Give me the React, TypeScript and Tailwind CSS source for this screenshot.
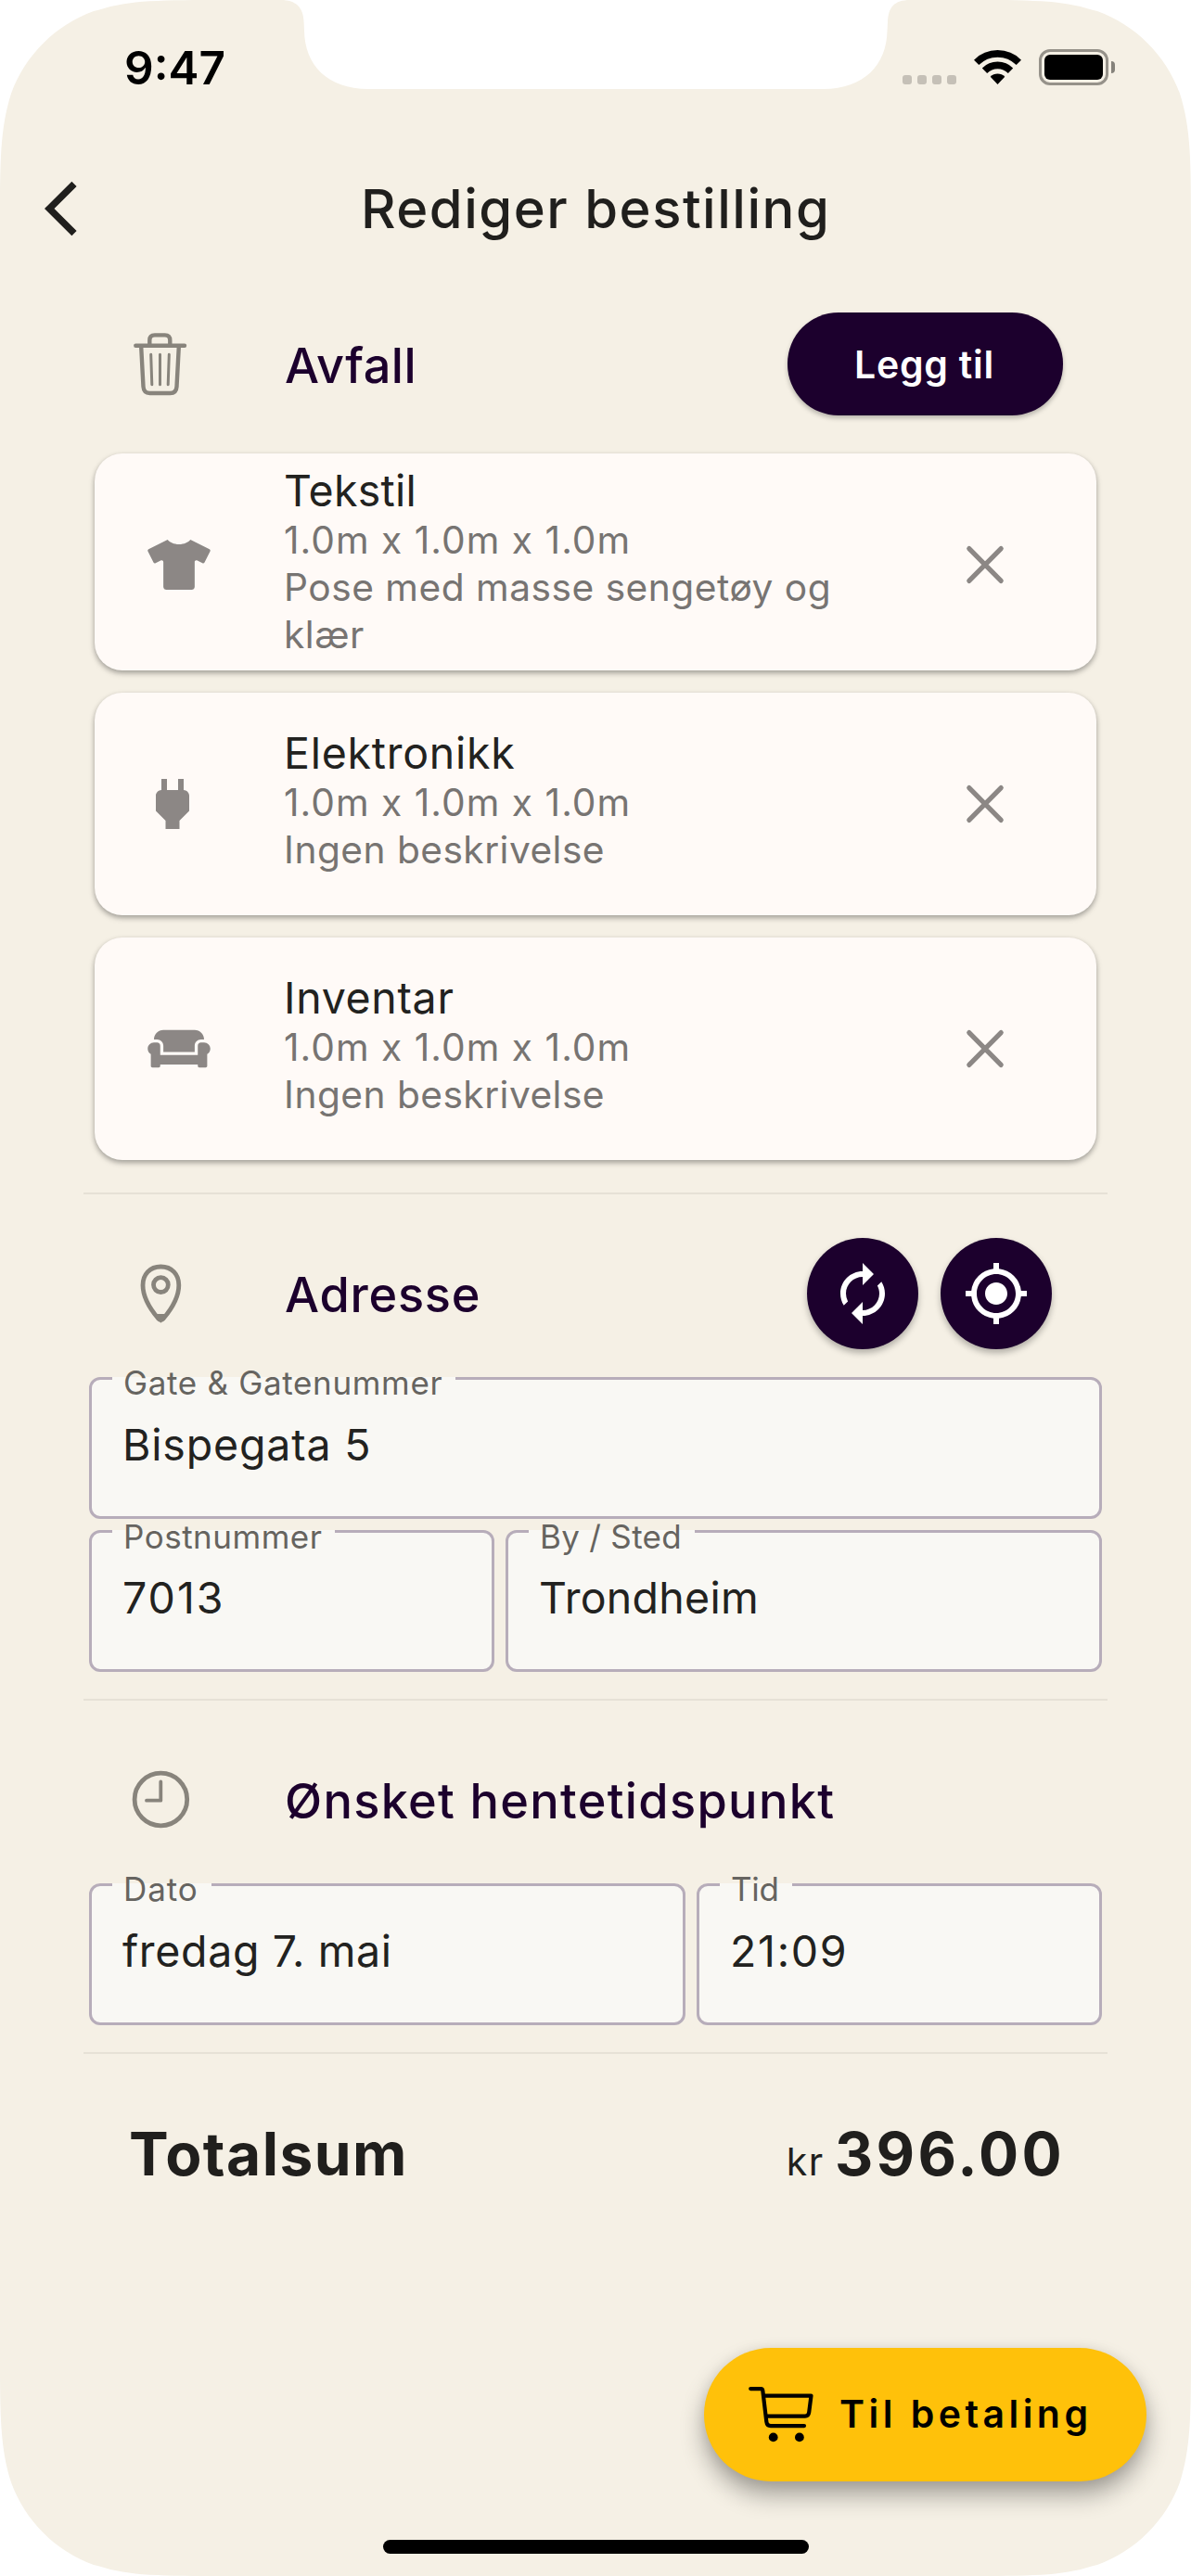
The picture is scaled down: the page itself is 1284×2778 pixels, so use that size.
import type { ReactNode } from "react";
import { FaCouch, FaTshirt } from "react-icons/fa";
import { MdAutorenew, MdMyLocation, MdPower } from "react-icons/md";

const CORNER =
  "M0 0H244.6C174.2 0 138.9 0 107.2 10.5L101 12C59.7 27 27 59.7 12 101C0 138.9 0 174.2 0 244.6Z";

function Corner({ className }: { className: string }) {
  return (
    <svg viewBox="0 0 245 245" className={`pointer-events-none absolute h-[245px] w-[245px] fill-white ${className}`}>
      <path d={CORNER} />
    </svg>
  );
}

function Notch() {
  return (
    <svg viewBox="0 0 684 96" className="absolute top-0 left-[300px] h-[96px] w-[684px] fill-white">
      <path d="M3 0C19 0 27.2 8 27.6 24L28 33C28.500 70 53 96 97 96H588C631 96 656 70 656.500 33L657 24C657.500 8 664 0 681 0Z" />
    </svg>
  );
}

function StatusBar() {
  return (
    <div className="flex h-[195px] items-start justify-between pt-[43px] pr-[82px] pl-[134px]">
      <span className="text-[49.5px] leading-[60px] font-semibold text-black">9:47</span>
      <div className="mt-[10px] flex items-start">
        <div className="mt-[28px] flex gap-[6px]">
          {[0, 1, 2, 3].map((i) => (
            <span key={i} className="h-[10px] w-[10px] rounded-[3px] bg-[#c5c0b7]" />
          ))}
        </div>
        <svg viewBox="0 0 51 37" className="mt-px ml-[19px] h-[37px] w-[51px]" fill="none" stroke="#000" strokeWidth="7.6">
          <path d="M2.660 13.360A32.300 32.300 0 0 1 48.340 13.360" />
          <path d="M11.500 22.200A19.800 19.800 0 0 1 39.500 22.200" />
          <path d="M25.500 37L17.700 28.800A11 11 0 0 1 33.300 28.800Z" fill="#000" stroke="none" />
        </svg>
        <div className="ml-[19px] flex h-[39px] w-[75px] rounded-[12px] border-[3px] border-[#96928a] p-[3px]">
          <span className="flex-1 rounded-[6px] bg-black" />
        </div>
        <span className="mt-[13px] ml-[3px] h-[13px] w-[4px] rounded-r-full bg-[#85827b]" />
      </div>
    </div>
  );
}

function TrashIcon() {
  return (
    <svg viewBox="137 357 72 72" className="h-[72px] w-[72px]" fill="none" stroke="#88847c" strokeLinecap="round" strokeLinejoin="round">
      <path strokeWidth="4.400" d="M146.300 372.700H199M161.300 372V367Q161.300 361.400 166.800 361.400H177.800Q183.300 361.400 183.300 367V372" />
      <path strokeWidth="4.400" d="M152.200 374L154.500 417Q155 424 161.500 424H183.500Q190 424 190.500 417L192.800 374" />
      <path strokeWidth="3" d="M162.700 382.300L163.800 414.700M172.500 382.300V414.700M182.300 382.300L181.200 414.700" />
    </svg>
  );
}

function PinIcon() {
  return (
    <svg viewBox="137 1359 72 72" className="h-[72px] w-[72px]" fill="none" stroke="#88847c" strokeWidth="4.800">
      <path
        strokeLinejoin="round"
        d="M173.400 1366C161.500 1366 154 1374.500 154 1386C154 1399 163.500 1413.500 170.500 1421.800Q173.400 1425 176.300 1421.800C183.300 1413.500 192.800 1399 192.800 1386C192.800 1374.500 185.300 1366 173.400 1366Z"
      />
      <path d="M170.500 1419.500L173.400 1423L176.300 1419.500Z" />
      <circle cx="173.400" cy="1385.600" r="7.900" />
    </svg>
  );
}

function ClockIcon() {
  return (
    <svg viewBox="137 1905 72 72" className="h-[72px] w-[72px]" fill="none" stroke="#88847c" strokeLinecap="round" strokeLinejoin="round">
      <circle cx="173.400" cy="1940.500" r="28.300" strokeWidth="4.800" />
      <path strokeWidth="3.800" d="M173.300 1921.500V1941.700H158" />
    </svg>
  );
}

function CartIcon() {
  return (
    <svg viewBox="0 0 70 60" className="h-[60px] w-[70px]" fill="none" stroke="#000" strokeWidth="4.200" strokeLinecap="round" strokeLinejoin="round">
      <path d="M2.200 2.100H13.500Q15 2.100 15.300 4L19.300 37.500Q19.800 42.100 24 42.100H60" />
      <path d="M16.300 9.600H67.500L65.200 27.500Q64.600 31.600 61 31.600H19.500" />
      <g fill="#000" stroke="none">
        <circle cx="26.700" cy="54.400" r="4.900" />
        <circle cx="54.900" cy="54.400" r="4.900" />
      </g>
    </svg>
  );
}

function SectionHeader({ icon, title, titleClass, children }: { icon: ReactNode; title: string; titleClass: string; children?: ReactNode }) {
  return (
    <div className="flex items-center pr-[138px] pl-[137px]">
      {icon}
      <h2 className={`ml-[98px] flex-1 pt-[2px] text-[52.3px] leading-[64px] font-medium whitespace-nowrap text-[#1c002d] ${titleClass}`}>{title}</h2>
      {children}
    </div>
  );
}

function WasteCard({ icon, title, titleClass, lines, className, iconClass, closeClass }: {
  icon: ReactNode;
  title: string;
  titleClass: string;
  lines: { text: string; className: string }[];
  className: string;
  iconClass: string;
  closeClass?: string;
}) {
  return (
    <article className={`mx-[102px] flex items-center rounded-[30px] bg-[#fffaf7] pr-[96px] shadow-[0_3px_6px_rgba(0,0,0,0.26),0_2px_5px_rgba(0,0,0,0.12)] ${className}`}>
      <div className={`flex w-[204px] text-[#8c8785] ${iconClass}`}>{icon}</div>
      <div className="flex-1">
        <h3 className={`text-[46.5px] leading-[56px] text-[#222220] ${titleClass}`}>{title}</h3>
        {lines.map((l) => (
          <p key={l.text} className={`text-[40.7px] leading-[51px] whitespace-nowrap text-[#777472] ${l.className}`}>{l.text}</p>
        ))}
      </div>
      <svg viewBox="0 0 48 48" className={`h-[48px] w-[48px] ${closeClass ?? ""}`} stroke="#8c8785" strokeWidth="5.200" strokeLinecap="round">
        <path d="M6.800 6.600L41.200 41.400M41.200 6.600L6.800 41.400" />
      </svg>
    </article>
  );
}

function Field({ label, labelClass, value, valueClass, className }: {
  label: string;
  labelClass: string;
  value: string;
  valueClass: string;
  className: string;
}) {
  return (
    <div className={`relative h-[153px] rounded-[12px] border-[3px] border-[#b7adba] bg-[#f9f8f4] pt-[42px] pl-[33px] ${className}`}>
      <div className="absolute -top-[3px] left-[22px] flex h-[3px] items-start bg-[#f9f8f4] pr-[14px] pl-[12px]">
        <span className={`text-[35px] leading-[42px] whitespace-nowrap text-[#666460] ${labelClass}`}>{label}</span>
      </div>
      <div className={`text-[46.5px] leading-[56px] whitespace-nowrap text-[#222220] ${valueClass}`}>{value}</div>
    </div>
  );
}

function RoundButton({ children }: { children: ReactNode }) {
  return (
    <button className="flex h-[120px] w-[120px] items-center justify-center rounded-full bg-[#1c002d] text-[72px] text-white shadow-[0_4px_7px_rgba(0,0,0,0.28)]">
      {children}
    </button>
  );
}

function Divider() {
  return <div className="mx-[90px] h-[2px] shrink-0 bg-[#e6e1d6]" />;
}

const DIMENSIONS = { text: "1.0m x 1.0m x 1.0m", className: "tracking-[1.02px]" };
const NO_DESCRIPTION = { text: "Ingen beskrivelse", className: "tracking-[0.46px]" };

export default function App() {
  return (
    <div className="relative flex h-[2778px] w-[1284px] flex-col overflow-hidden bg-[#f5f0e5] font-['Inter',sans-serif]">
      <Corner className="top-0 left-0" />
      <Corner className="top-0 right-0 -scale-x-100" />
      <Corner className="bottom-0 left-0 -scale-y-100" />
      <Corner className="right-0 bottom-0 rotate-180" />
      <Notch />

      <StatusBar />
      <header className="flex h-[60px] items-center pl-[48px]">
        <svg viewBox="0 0 11.800 20" className="h-[60px] w-[35px]" fill="#201f1d">
          <path d="M11.670 1.870L9.900 0.100L0 10L9.900 19.900L11.670 18.130L3.540 10Z" />
        </svg>
        <h1 className="ml-[306px] text-[58px] leading-[60px] font-medium tracking-[1.5px] whitespace-nowrap text-[#201f1d]">Rediger bestilling</h1>
      </header>

      <div className="mt-[82px]">
        <SectionHeader icon={<TrashIcon />} title="Avfall" titleClass="tracking-[0.47px]">
          <button className="flex h-[111px] w-[297px] items-center justify-center rounded-[55px] bg-[#1c002d] pr-[2px] text-[41px] leading-[50px] font-[560] tracking-[0.76px] text-white shadow-[0_3px_5px_rgba(0,0,0,0.25)]">
            Legg til
          </button>
        </SectionHeader>
      </div>

      <div className="mt-[41px] mb-[35px] flex flex-col gap-[24px]">
        <WasteCard
          className="h-[234px]"
          iconClass="pl-[57px] mt-[5px]"
          closeClass="mt-[5px]"
          icon={<FaTshirt className="h-[54px] w-[68px]" />}
          title="Tekstil"
          titleClass="-mt-[2px] tracking-[0.24px]"
          lines={[
            DIMENSIONS,
            { text: "Pose med masse sengetøy og", className: "tracking-[0.5px]" },
            { text: "klær", className: "tracking-[0.5px]" },
          ]}
        />
        <WasteCard
          className="h-[240px]"
          iconClass="pl-[48px]"
          icon={<MdPower className="h-[72px] w-[72px]" />}
          title="Elektronikk"
          titleClass="-mt-[9px] tracking-[0.73px]"
          lines={[DIMENSIONS, NO_DESCRIPTION]}
        />
        <WasteCard
          className="h-[240px]"
          iconClass="pl-[57px]"
          icon={<FaCouch className="h-[54px] w-[68px]" />}
          title="Inventar"
          titleClass="-mt-[9px] tracking-[0.68px]"
          lines={[DIMENSIONS, NO_DESCRIPTION]}
        />
      </div>
      <Divider />

      <div className="mt-[47px]">
        <SectionHeader icon={<PinIcon />} title="Adresse" titleClass="tracking-[0.75px]">
          <div className="mr-[12px] flex gap-[24px]">
            <RoundButton><MdAutorenew /></RoundButton>
            <RoundButton><MdMyLocation /></RoundButton>
          </div>
        </SectionHeader>
      </div>
      <div className="mx-[96px] mt-[30px] mb-[29px] flex flex-col gap-[12px]">
        <Field className="w-full" label="Gate & Gatenummer" labelClass="-mt-[15px] tracking-[0.66px]" value="Bispegata 5" valueClass="tracking-[0.83px]" />
        <div className="flex gap-[12px]">
          <Field className="w-[437px]" label="Postnummer" labelClass="-mt-[14px] tracking-[0.51px]" value="7013" valueClass="tracking-[2px]" />
          <Field className="flex-1" label="By / Sted" labelClass="-mt-[14px] tracking-[0.3px]" value="Trondheim" valueClass="tracking-[0.27px]" />
        </div>
      </div>
      <Divider />

      <div className="mt-[47px] flex h-[120px] flex-col justify-center">
        <SectionHeader icon={<ClockIcon />} title="Ønsket hentetidspunkt" titleClass="tracking-[1.32px]" />
      </div>
      <div className="mx-[96px] mt-[30px] mb-[29px] flex gap-[12px]">
        <Field className="w-[643px]" label="Dato" labelClass="-mt-[15px] tracking-[0.9px]" value="fredag 7. mai" valueClass="tracking-[0.65px]" />
        <Field className="flex-1" label="Tid" labelClass="-mt-[15px] tracking-[-0.3px]" value="21:09" valueClass="tracking-[1.7px]" />
      </div>
      <Divider />

      <div className="mt-[68px] flex items-baseline justify-between pr-[136px] pl-[139px] text-[#201f1d]">
        <span className="text-[64px] leading-[80px] font-bold tracking-[1.45px]">Totalsum</span>
        <span className="flex items-baseline">
          <span className="text-[41px] tracking-[1.7px]">kr</span>
          <span className="ml-[11px] text-[64px] leading-[80px] font-bold tracking-[3.28px]">396.00</span>
        </span>
      </div>

      <button className="mt-[169px] mr-[48px] flex h-[144px] w-[477px] shrink-0 items-center self-end rounded-full bg-[#ffc10a] pl-[48px] shadow-[0_15px_26px_rgba(0,0,0,0.32),0_2px_14px_rgba(0,0,0,0.08)]">
        <CartIcon />
        <span className="-mt-[2px] ml-[28px] text-[41px] leading-[50px] font-[560] tracking-[4.45px] whitespace-nowrap text-black">Til betaling</span>
      </button>
      <div className="mt-[63px] h-[15px] w-[459px] shrink-0 self-center rounded-full bg-black" />
    </div>
  );
}
